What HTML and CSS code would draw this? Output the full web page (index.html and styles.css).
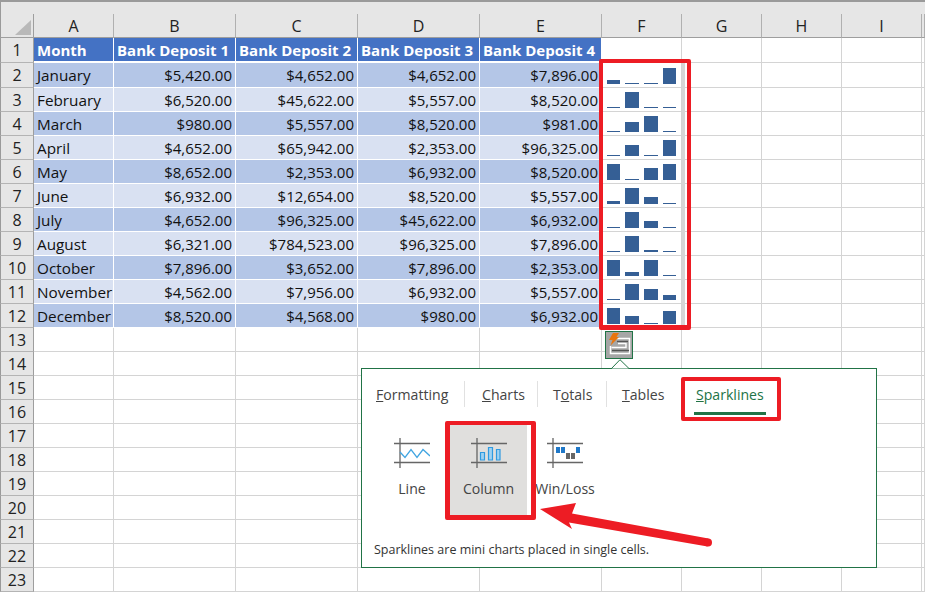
FILE: index.html
```html
<!DOCTYPE html>
<html lang="en">
<head>
<meta charset="utf-8">
<title>Sparklines</title>
<link rel="stylesheet" href="styles.css">
</head>
<body>
<div class="app">
  <div class="chrome"></div>
  <table class="sheet">
    <colgroup><col class="c-rh"><col class="c-s"><col class="c-l"><col class="c-l"><col class="c-l"><col class="c-l"><col class="c-s"><col class="c-s"><col class="c-s"><col class="c-s"><col class="c-j"></colgroup>
    <tr class="r-head"><th class="corner"><svg class="tri" width="16" height="15" viewBox="0 0 16 15"><polygon points="0,15 16,15 16,0"/></svg></th><th>A</th><th>B</th><th>C</th><th>D</th><th>E</th><th>F</th><th>G</th><th>H</th><th>I</th><th></th></tr>
    <tr class="r-first"><th class="rh">1</th><td class="h">Month</td><td class="h">Bank Deposit 1</td><td class="h">Bank Deposit 2</td><td class="h">Bank Deposit 3</td><td class="h">Bank Deposit 4</td><td></td><td></td><td></td><td></td><td></td></tr>
    <tr class="r-second a"><th class="rh">2</th><td class="t">January</td><td class="t n">$5,420.00</td><td class="t n">$4,652.00</td><td class="t n">$4,652.00</td><td class="t n">$7,896.00</td><td class="sp"><div class="bars"><i style="height:4px"></i><i style="height:1px"></i><i style="height:1px"></i><i style="height:16px"></i></div></td><td></td><td></td><td></td><td></td></tr>
    <tr class="b"><th class="rh">3</th><td class="t">February</td><td class="t n">$6,520.00</td><td class="t n">$45,622.00</td><td class="t n">$5,557.00</td><td class="t n">$8,520.00</td><td class="sp"><div class="bars"><i style="height:1px"></i><i style="height:16px"></i><i style="height:1px"></i><i style="height:1px"></i></div></td><td></td><td></td><td></td><td></td></tr>
    <tr class="a"><th class="rh">4</th><td class="t">March</td><td class="t n">$980.00</td><td class="t n">$5,557.00</td><td class="t n">$8,520.00</td><td class="t n">$981.00</td><td class="sp"><div class="bars"><i style="height:1px"></i><i style="height:10px"></i><i style="height:16px"></i><i style="height:1px"></i></div></td><td></td><td></td><td></td><td></td></tr>
    <tr class="b"><th class="rh">5</th><td class="t">April</td><td class="t n">$4,652.00</td><td class="t n">$65,942.00</td><td class="t n">$2,353.00</td><td class="t n">$96,325.00</td><td class="sp"><div class="bars"><i style="height:1px"></i><i style="height:11px"></i><i style="height:1px"></i><i style="height:16px"></i></div></td><td></td><td></td><td></td><td></td></tr>
    <tr class="a"><th class="rh">6</th><td class="t">May</td><td class="t n">$8,652.00</td><td class="t n">$2,353.00</td><td class="t n">$6,932.00</td><td class="t n">$8,520.00</td><td class="sp"><div class="bars"><i style="height:16px"></i><i style="height:1px"></i><i style="height:12px"></i><i style="height:16px"></i></div></td><td></td><td></td><td></td><td></td></tr>
    <tr class="b"><th class="rh">7</th><td class="t">June</td><td class="t n">$6,932.00</td><td class="t n">$12,654.00</td><td class="t n">$8,520.00</td><td class="t n">$5,557.00</td><td class="sp"><div class="bars"><i style="height:3px"></i><i style="height:16px"></i><i style="height:7px"></i><i style="height:1px"></i></div></td><td></td><td></td><td></td><td></td></tr>
    <tr class="a"><th class="rh">8</th><td class="t">July</td><td class="t n">$4,652.00</td><td class="t n">$96,325.00</td><td class="t n">$45,622.00</td><td class="t n">$6,932.00</td><td class="sp"><div class="bars"><i style="height:1px"></i><i style="height:16px"></i><i style="height:7px"></i><i style="height:1px"></i></div></td><td></td><td></td><td></td><td></td></tr>
    <tr class="b"><th class="rh">9</th><td class="t">August</td><td class="t n">$6,321.00</td><td class="t n">$784,523.00</td><td class="t n">$96,325.00</td><td class="t n">$7,896.00</td><td class="sp"><div class="bars"><i style="height:1px"></i><i style="height:16px"></i><i style="height:2px"></i><i style="height:1px"></i></div></td><td></td><td></td><td></td><td></td></tr>
    <tr class="a"><th class="rh">10</th><td class="t">October</td><td class="t n">$7,896.00</td><td class="t n">$3,652.00</td><td class="t n">$7,896.00</td><td class="t n">$2,353.00</td><td class="sp"><div class="bars"><i style="height:16px"></i><i style="height:4px"></i><i style="height:16px"></i><i style="height:1px"></i></div></td><td></td><td></td><td></td><td></td></tr>
    <tr class="b"><th class="rh">11</th><td class="t">November</td><td class="t n">$4,562.00</td><td class="t n">$7,956.00</td><td class="t n">$6,932.00</td><td class="t n">$5,557.00</td><td class="sp"><div class="bars"><i style="height:1px"></i><i style="height:16px"></i><i style="height:11px"></i><i style="height:5px"></i></div></td><td></td><td></td><td></td><td></td></tr>
    <tr class="a"><th class="rh">12</th><td class="t">December</td><td class="t n">$8,520.00</td><td class="t n">$4,568.00</td><td class="t n">$980.00</td><td class="t n">$6,932.00</td><td class="sp"><div class="bars"><i style="height:16px"></i><i style="height:8px"></i><i style="height:1px"></i><i style="height:13px"></i></div></td><td></td><td></td><td></td><td></td></tr>
    <tr><th class="rh">13</th><td></td><td></td><td></td><td></td><td></td><td></td><td></td><td></td><td></td><td></td></tr>
    <tr><th class="rh">14</th><td></td><td></td><td></td><td></td><td></td><td></td><td></td><td></td><td></td><td></td></tr>
    <tr><th class="rh">15</th><td></td><td></td><td></td><td></td><td></td><td></td><td></td><td></td><td></td><td></td></tr>
    <tr><th class="rh">16</th><td></td><td></td><td></td><td></td><td></td><td></td><td></td><td></td><td></td><td></td></tr>
    <tr><th class="rh">17</th><td></td><td></td><td></td><td></td><td></td><td></td><td></td><td></td><td></td><td></td></tr>
    <tr><th class="rh">18</th><td></td><td></td><td></td><td></td><td></td><td></td><td></td><td></td><td></td><td></td></tr>
    <tr><th class="rh">19</th><td></td><td></td><td></td><td></td><td></td><td></td><td></td><td></td><td></td><td></td></tr>
    <tr><th class="rh">20</th><td></td><td></td><td></td><td></td><td></td><td></td><td></td><td></td><td></td><td></td></tr>
    <tr><th class="rh">21</th><td></td><td></td><td></td><td></td><td></td><td></td><td></td><td></td><td></td><td></td></tr>
    <tr><th class="rh">22</th><td></td><td></td><td></td><td></td><td></td><td></td><td></td><td></td><td></td><td></td></tr>
    <tr><th class="rh">23</th><td></td><td></td><td></td><td></td><td></td><td></td><td></td><td></td><td></td><td></td></tr>
  </table>

  <div class="sel-band"></div>

  <button class="qa-btn">
    <svg width="26" height="26" viewBox="0 0 26 26">
      <path d="M9 6.500H23.500V21.500H4.500V14" fill="none" stroke="#fff" stroke-width="1.500"/>
      <path d="M11 9.500H22" stroke="#555" stroke-width="1.300"/>
      <path d="M12 11.500H20V15.500H5.500" fill="none" stroke="#fff" stroke-width="1.400"/>
      <path d="M6 18.500H23" stroke="#555" stroke-width="1.300"/>
      <polygon points="7,1 13,1 10.500,5 13,5 4.500,13.500 6.500,8 3,8" fill="#e8760f"/>
    </svg>
  </button>

  <section class="popup">
    <svg class="notch" width="19" height="10" viewBox="0 0 19 10"><polygon points="0.5,9.5 9,0.7 18,9.5" fill="#fff"/><polyline points="0,10 9,0.7 18.500,10" fill="none" stroke="#217346"/></svg>
    <nav class="tabs">
      <a class="tab tab-formatting"><u>F</u>ormatting</a>
      <a class="tab tab-charts"><u>C</u>harts</a>
      <a class="tab tab-totals">T<u>o</u>tals</a>
      <a class="tab tab-tables"><u>T</u>ables</a>
      <a class="tab active"><u>S</u>parklines</a>
    </nav>
    <div class="options">
      <div class="opt">
        <svg width="36" height="30" viewBox="0 0 36 30"><path class="ax" d="M6 0V30M0 5.500H36M0 24.500H36"/><polyline class="ln" points="6,14 11,19.500 17,11.500 23,19.500 29,11.500 36,18"/></svg>
        <span>Line</span>
      </div>
      <div class="opt on">
        <svg width="36" height="30" viewBox="0 0 36 30"><path class="ax" d="M6 0V30M0 5.500H36M0 24.500H36"/><path class="bar" d="M9.500 14.500h4v7.500h-4zM17.500 9.500h4v12.500h-4zM25.500 11.500h3.500v10.500h-3.500z"/></svg>
        <span>Column</span>
      </div>
      <div class="opt">
        <svg width="36" height="30" viewBox="0 0 36 30"><path class="ax" d="M6 0V30M0 5.500H36M0 24.500H36"/><path class="wl" d="M9 9h4v6H9zM14 9h4v6h-4zM29 9h4v6h-4z"/><path class="wl2" d="M19 15h4v6h-4zM24 15h4v6h-4z"/></svg>
        <span>Win/Loss</span>
      </div>
    </div>
    <p class="note">Sparklines are mini charts placed in single cells.</p>
  </section>

  <div class="mark mark-range"></div>
  <div class="mark mark-tab"></div>
  <div class="mark mark-col"></div>
  <svg class="arrow" width="180" height="50" viewBox="0 0 180 50"><polygon points="0,8 36,2 32,12.500 168.500,37.500 167.500,45.500 29,21.500 32,28" fill="#ed1c24"/><circle cx="168" cy="41.500" r="4" fill="#ed1c24"/></svg>
</div>
</body>
</html>
```
FILE: styles.css
```css
* { box-sizing: border-box; }
html, body { margin: 0; padding: 0; background: #fff; }
body { overflow: hidden; }
.app { position: relative; width: 925px; height: 592px; overflow: hidden; font-family: "Open Sans", "Noto Sans", sans-serif; color: #111; }
.chrome { height: 14px; background: #e6e6e6; border-top: 2px solid #9a9a9a; border-left: 1px solid #9a9a9a; }

.sheet { border-collapse: separate; border-spacing: 0; table-layout: fixed; width: 925px; font-size: 15.300px; }
.c-rh { width: 34px; } .c-s { width: 80px; } .c-l { width: 122px; } .c-j { width: 3px; }
.sheet tr { height: 24px; }
.sheet .r-head { height: 24px; }
.sheet .r-first, .sheet .r-second { height: 25px; }
.sheet th { padding: 0; font-weight: 400; background: #e6e6e6; color: #222; font-size: 16px; text-align: center; border-right: 1px solid #a9a9a9; border-bottom: 1px solid #a9a9a9; }
.sheet .r-head th { border-right: 1px solid #b0b0b0; border-bottom: 1px solid #9e9e9e; }
.sheet th.corner { border-left: 1px solid #9a9a9a; border-right: 1px solid #9e9e9e; position: relative; padding: 3px 2px 0 13px; line-height: 0; }
.tri { fill: #b9b9b9; }
.sheet th.rh { border-left: 1px solid #9a9a9a; border-right: 1px solid #9e9e9e; border-bottom: 1px solid #b4b4b4; }
.sheet td { padding: 0 3px; border-right: 1px solid #d4d4d4; border-bottom: 1px solid #d4d4d4; white-space: nowrap; overflow: visible; }
.sheet td.h { background: #4472c4; color: #fff; font-weight: 700; font-size: 15px; border-right-color: #fff; border-bottom: 2px solid #fff; padding-top: 1px; }
.sheet td.t { border-right-color: #fff; border-bottom-color: #fff; color: #111; }
.a td.t { background: #b4c6e7; }
.b td.t { background: #d9e1f2; }
.sheet td.n { text-align: right; padding-right: 3px; font-size: 15px; }
.sheet td.sp { padding: 0 5px 3px; vertical-align: bottom; }
.bars { display: flex; gap: 5px; align-items: flex-end; height: 16px; }
.bars i { display: block; width: 14px; background: #355f95; }
.bars i:first-child, .bars i:last-child { width: 13px; }

.sel-band { position: absolute; left: 682px; top: 63px; width: 3px; height: 262px; background: #d6d6d6; }

.qa-btn { position: absolute; left: 605px; top: 331px; width: 28px; height: 28px; padding: 0; background: #a6a6a6; border: 1px solid #217346; display: flex; align-items: center; justify-content: center; }

.popup { position: absolute; left: 361px; top: 368px; width: 516px; height: 200px; background: #fff; border: 1px solid #217346; }
.notch { position: absolute; left: 249px; top: -10px; }
.tabs { display: flex; align-items: stretch; margin: 12px 0 0 0; height: 26px; }
.tab { font-size: 14.100px; color: #444; line-height: 28px; border-right: 1px solid #e1e1e1; position: relative; white-space: nowrap; }
.tab-formatting { width: 103px; padding-left: 14px; }
.tab-charts { width: 73px; padding-left: 17px; }
.tab-totals { width: 69px; padding-left: 15px; }
.tab-tables { width: 75px; padding-left: 15px; }
.tab.active { color: #217346; border-right: 0; padding-left: 14px; }
.tab.active::after { content: ""; position: absolute; left: 12px; right: -2px; top: 31px; height: 3px; background: #217346; }
.options { display: flex; margin: 18px 0 0 12px; }
.opt { width: 76px; height: 90px; flex: none; display: flex; flex-direction: column; align-items: center; padding-top: 13px; font-size: 14.100px; color: #444; }
.opt.on { width: 77px; background: #e0dfdd; }
.opt span { margin-top: 11px; white-space: nowrap; }
.ax { fill: none; stroke: #666; stroke-width: 1.300; }
.ln { fill: none; stroke: #41a5e1; stroke-width: 1.300; }
.bar { fill: #9fd2f2; stroke: #2f9ae0; stroke-width: 1.200; }
.wl { fill: #1f78c8; }
.wl2 { fill: #666; }
.note { font-size: 12.500px; color: #333; margin: 26px 0 0 12px; }

.mark { position: absolute; border: 4px solid #ed1c24; border-radius: 2px; }
.mark-range { left: 599px; top: 59px; width: 92px; height: 271px; border-bottom-width: 5px; }
.mark-tab { left: 681px; top: 377px; width: 100px; height: 44px; }
.mark-col { left: 445px; top: 421px; width: 91px; height: 99px; border-width: 4px 5px 5px; }
.arrow { position: absolute; left: 540px; top: 501px; }
```
